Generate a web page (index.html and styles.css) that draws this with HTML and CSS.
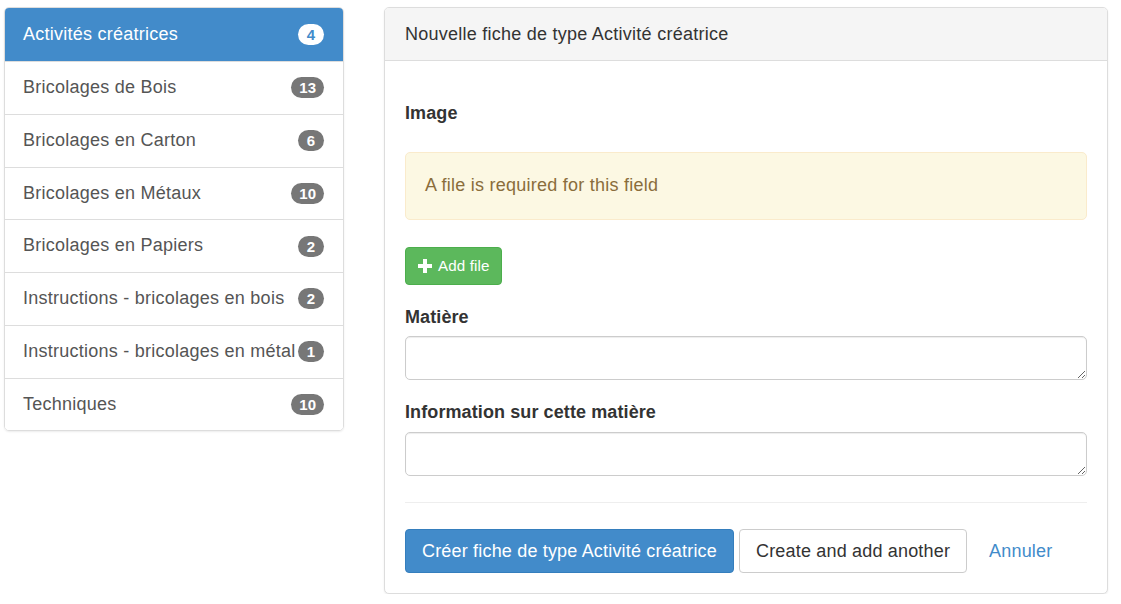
FILE: index.html
```html
<!DOCTYPE html>
<html lang="fr">
<head>
<meta charset="utf-8">
<title>Nouvelle fiche</title>
<link rel="stylesheet" href="styles.css">
</head>
<body>
<div class="page">
  <div class="list-group">
    <a class="list-item active" href="#"><span class="item-text">Activités créatrices</span><span class="badge">4</span></a>
    <a class="list-item" href="#"><span class="item-text">Bricolages de Bois</span><span class="badge">13</span></a>
    <a class="list-item" href="#"><span class="item-text">Bricolages en Carton</span><span class="badge">6</span></a>
    <a class="list-item" href="#"><span class="item-text">Bricolages en Métaux</span><span class="badge">10</span></a>
    <a class="list-item" href="#"><span class="item-text">Bricolages en Papiers</span><span class="badge">2</span></a>
    <a class="list-item" href="#"><span class="item-text">Instructions - bricolages en bois</span><span class="badge">2</span></a>
    <a class="list-item" href="#"><span class="item-text">Instructions - bricolages en métal</span><span class="badge">1</span></a>
    <a class="list-item" href="#"><span class="item-text">Techniques</span><span class="badge">10</span></a>
  </div>
  <div class="panel">
    <div class="panel-heading">Nouvelle fiche de type Activité créatrice</div>
    <div class="panel-body">
      <div class="form-group first">
        <label class="label">Image</label>
        <div class="alert">A file is required for this field</div>
        <button class="btn btn-success" type="button"><svg class="plus" viewBox="0 0 14 14" width="14" height="14"><path d="M5 0h4v5h5v4H9v5H5V9H0V5h5z" fill="#fff"/></svg>Add file</button>
      </div>
      <div class="form-group">
        <label class="label">Matière</label>
        <textarea class="form-control" rows="1"></textarea>
      </div>
      <div class="form-group">
        <label class="label">Information sur cette matière</label>
        <textarea class="form-control" rows="1"></textarea>
      </div>
      <hr class="divider">
      <div class="actions">
        <button class="btn btn-lg btn-primary" type="button">Créer fiche de type Activité créatrice</button>
        <button class="btn btn-lg btn-default" type="button">Create and add another</button>
        <a class="btn btn-lg btn-link" href="#">Annuler</a>
      </div>
    </div>
  </div>
</div>
</body>
</html>
```

FILE: styles.css
```css
* { box-sizing: border-box; }
html, body { margin: 0; padding: 0; background: #fff; }
body {
  font-family: "Liberation Sans", Arial, Helvetica, sans-serif;
  font-size: 18px;
  letter-spacing: 0.25px;
  line-height: 25.4px;
  color: #333;
}
.page {
  display: flex;
  align-items: flex-start;
  gap: 40px;
  padding: 7px 13px 0 4px;
}
.list-group {
  width: 340px;
  flex: none;
  display: flex;
  flex-direction: column;
  border: 1px solid #ddd;
  border-radius: 5px;
  box-shadow: 0 1px 2px rgba(0,0,0,.08);
  overflow: hidden;
}
.list-item {
  display: flex;
  align-items: center;
  justify-content: space-between;
  padding: 0 19px 0 18px;
  height: 52.75px;
  border-top: 1px solid #ddd;
  color: #555;
  text-decoration: none;
  background: #fff;
}
.list-item:first-child { border-top: none; height: 53px; }
.item-text { white-space: nowrap; }
.list-item.active { background: #428bca; color: #fff; }
.badge {
  flex: none;
  min-width: 26px;
  height: 21px;
  padding: 0 8px;
  border-radius: 11px;
  background: #777;
  color: #fff;
  font-size: 15px;
  letter-spacing: 0;
  font-weight: bold;
  line-height: 21px;
  text-align: center;
}
.active .badge { background: #fff; color: #428bca; }
.panel {
  flex: 1;
  border: 1px solid #ddd;
  border-radius: 5px;
  box-shadow: 0 1px 2px rgba(0,0,0,.08);
  background: #fff;
}
.panel-heading {
  background: #f5f5f5;
  border-bottom: 1px solid #ddd;
  border-radius: 4px 4px 0 0;
  padding: 13px 19px 13px 20px;
  line-height: 26px;
  color: #333;
}
.panel-body {
  padding: 40px 20px 20px 20px;
  display: flex;
  flex-direction: column;
}
.form-group { display: flex; flex-direction: column; align-items: flex-start; margin-bottom: 20px; }
.label {
  display: block;
  font-weight: bold;
  letter-spacing: 0.1px;
  margin-bottom: 6px;
  color: #333;
}
.form-group.first .label { margin-bottom: 26px; }
.alert {
  align-self: stretch;
  background: #fcf8e3;
  border: 1px solid #faebcc;
  color: #8a6d3b;
  border-radius: 5px;
  padding: 20px 19px;
  margin-bottom: 27px;
}
.btn {
  display: inline-flex;
  align-items: center;
  font-family: inherit;
  border: 1px solid transparent;
  border-radius: 4px;
  cursor: pointer;
  text-decoration: none;
  white-space: nowrap;
}
.btn-success {
  background: #5cb85c;
  border-color: #4cae4c;
  color: #fff;
  font-size: 15.2px;
  letter-spacing: 0.1px;
  line-height: 23px;
  height: 38px;
  padding: 0 12px;
  gap: 6px;
}
.plus { display: block; }
.form-control {
  align-self: stretch;
  display: block;
  height: 44px;
  padding: 8px 15px;
  font-family: inherit;
  font-size: 17.8px;
  border: 1px solid #ccc;
  border-radius: 5px;
  box-shadow: inset 0 1px 1px rgba(0,0,0,.075);
  resize: vertical;
  background: #fff;
}
.divider {
  border: 0;
  border-top: 1px solid #eee;
  margin: 6px 0 26px;
  width: 100%;
}
.actions { display: flex; align-items: center; gap: 5px; }
.btn-lg {
  font-size: 18px;
  letter-spacing: 0.18px;
  height: 44px;
  line-height: 26px;
  padding: 0 16px;
}
.btn-primary { background: #428bca; border-color: #357ebd; color: #fff; }
.btn-default { background: #fff; border-color: #ccc; color: #333; }
.btn-link { background: none; color: #428bca; border-color: transparent; }
```
